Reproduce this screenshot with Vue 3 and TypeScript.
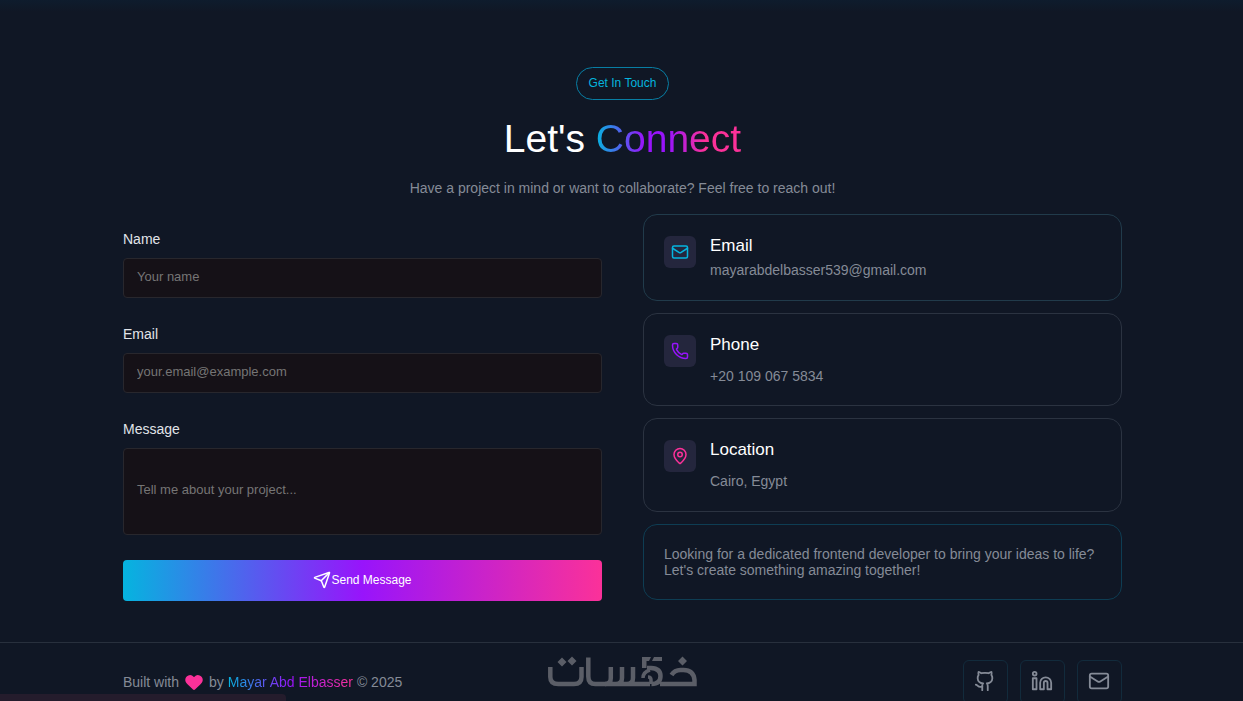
<script setup lang="ts">
interface Contact {
  title: string
  value: string
  kind: 'mail' | 'phone' | 'pin'
}

const contacts: Contact[] = [
  { title: 'Email', value: 'mayarabdelbasser539@gmail.com', kind: 'mail' },
  { title: 'Phone', value: '+20 109 067 5834', kind: 'phone' },
  { title: 'Location', value: 'Cairo, Egypt', kind: 'pin' },
]

const socials = ['github', 'linkedin', 'mail']
</script>

<template>
  <div class="page">
    <main class="wrap">
      <header class="intro">
        <span class="badge">Get In Touch</span>
        <h1>Let's <span class="gradient-text">Connect</span></h1>
        <p>Have a project in mind or want to collaborate? Feel free to reach out!</p>
      </header>

      <div class="columns">
        <form class="form" @submit.prevent>
          <label for="name">Name</label>
          <input id="name" type="text" placeholder="Your name" />
          <label for="email">Email</label>
          <input id="email" type="email" placeholder="your.email@example.com" />
          <label for="message">Message</label>
          <textarea id="message" placeholder="Tell me about your project..."></textarea>
          <button type="submit">
            <svg class="icon" viewBox="0 0 24 24" width="18" height="18">
              <path d="M14.536 21.686a.5.5 0 0 0 .937-.024l6.5-19a.496.496 0 0 0-.635-.635l-19 6.5a.5.5 0 0 0-.024.937l7.93 3.18a2 2 0 0 1 1.112 1.11z" />
              <path d="m21.854 2.147-10.94 10.939" />
            </svg>
            <span>Send Message</span>
          </button>
        </form>

        <div class="cards">
          <section v-for="c in contacts" :key="c.kind" class="card" :class="c.kind">
            <span class="tile">
              <svg class="icon" viewBox="0 0 24 24" width="18" height="18">
                <template v-if="c.kind === 'mail'">
                  <path d="m22 7-8.991 5.727a2 2 0 0 1-2.009 0L2 7" />
                  <rect x="2" y="4" width="20" height="16" rx="2" />
                </template>
                <path v-else-if="c.kind === 'phone'" d="M13.832 16.568a1 1 0 0 0 1.213-.303l.355-.465A2 2 0 0 1 17 15h3a2 2 0 0 1 2 2v3a2 2 0 0 1-2 2A18 18 0 0 1 2 4a2 2 0 0 1 2-2h3a2 2 0 0 1 2 2v3a2 2 0 0 1-.8 1.6l-.468.351a1 1 0 0 0-.292 1.233 14 14 0 0 0 6.392 6.384" />
                <template v-else>
                  <path d="M20 10c0 4.993-5.539 10.193-7.399 11.799a1 1 0 0 1-1.202 0C9.539 20.193 4 14.993 4 10a8 8 0 0 1 16 0" />
                  <circle cx="12" cy="10" r="3" />
                </template>
              </svg>
            </span>
            <div class="detail">
              <h2>{{ c.title }}</h2>
              <p>{{ c.value }}</p>
            </div>
          </section>
          <p class="note">Looking for a dedicated frontend developer to bring your ideas to life? Let's create something amazing together!</p>
        </div>
      </div>
    </main>

    <footer>
      <div class="wrap foot">
        <p class="credit">
          <span>Built with</span>
          <svg viewBox="0 0 24 24" width="20" height="20" aria-label="love">
            <path fill="#fb3199" d="M1.500 9.500a5.800 5.800 0 0 1 10-3.900.7.7 0 0 0 1 0A5.800 5.800 0 0 1 22.500 9.500c0 2.290-1.500 4-3 5.500l-6 5.800a2 2 0 0 1-3 0L4.500 15c-1.500-1.500-3-3.200-3-5.500" />
          </svg>
          <span>by <span class="gradient-text">Mayar Abd Elbasser</span> © 2025</span>
        </p>
        <svg class="mark" viewBox="0 0 150 32" width="150" height="32" role="img" aria-label="خمسات">
          <g fill="none" stroke="#5b5e67" stroke-width="4.500">
            <path d="M2.300 11v10q0 7 8 7h15.700q7.500 0 7.500-7V11" />
            <path d="M40.300 1.500v19q0 7.500 7 7.500h10q5.500 0 5.500-6V11" />
            <path d="M57 28h11q6 0 6-6V11M68 28h11q6 0 6-6V11M79 28h23" />
            <path d="M99 12h4q9.500.5 9.500 8 0 8-9 8" />
            <path d="M112 28h34.500v-4q-1-10-11-10h-3q-6 0-9 5" />
          </g>
          <path fill="none" stroke="#5b5e67" stroke-width="3.500" d="M95 22q0-6 7-8M103 28v-4q0-3-3-3" />
          <path fill="#5b5e67" d="M94 1h9l-2 4h-2.500v7H94zM106 1h8v4h-10zM14 1.500l4.500 4.500-4.500 4.500L9.500 6zM24 .5 28.500 5 24 9.500 19.500 5zM134.500.5l4.500 4.500-4.500 4.500L130 5z" />
        </svg>
        <nav>
          <a v-for="s in socials" :key="s" href="#" :aria-label="s">
            <svg class="icon" viewBox="0 0 24 24" width="22" height="22">
              <template v-if="s === 'github'">
                <path d="M15 22v-4a4.800 4.800 0 0 0-1-3.500c3 0 6-2 6-5.500.08-1.250-.27-2.480-1-3.500.28-1.150.28-2.350 0-3.500 0 0-1 0-3 1.500-2.640-.5-5.360-.5-8 0C6 2 5 2 5 2c-.3 1.150-.3 2.350 0 3.500A5.403 5.403 0 0 0 4 9c0 3.500 3 5.500 6 5.500-.39.49-.68 1.050-.85 1.650-.17.6-.22 1.230-.15 1.850v4" />
                <path d="M9 18c-4.510 2-5-2-7-2" />
              </template>
              <template v-else-if="s === 'linkedin'">
                <path d="M16 8a6 6 0 0 1 6 6v7h-4v-7a2 2 0 0 0-4 0v7h-4v-7a6 6 0 0 1 6-6z" />
                <rect x="2" y="9" width="4" height="12" />
                <circle cx="4" cy="4" r="2" />
              </template>
              <template v-else>
                <path d="m22 7-8.991 5.727a2 2 0 0 1-2.009 0L2 7" />
                <rect x="2" y="4" width="20" height="16" rx="2" />
              </template>
            </svg>
          </a>
        </nav>
      </div>
    </footer>
    <div class="status"></div>
  </div>
</template>

<style>
html {
  background: #101725;
  scrollbar-width: none;
}
body {
  margin: 0;
}
</style>

<style scoped>
* {
  box-sizing: border-box;
}
.page {
  min-height: 100vh;
  background: linear-gradient(#0e1c2d, #101725 12px);
  color: #858b97;
  font-family: "Liberation Sans", Arial, sans-serif;
  font-size: 14px;
  line-height: 16px;
}
h1,
h2,
p {
  margin: 0;
  font-weight: 400;
}
.wrap {
  padding: 0 121px 0 123px;
}
.intro {
  display: flex;
  flex-direction: column;
  align-items: center;
  padding-top: 67px;
}
.badge {
  padding: 8px 12px;
  border: 1px solid #087ea4;
  border-radius: 17px;
  color: #05b4df;
  font-size: 12px;
  line-height: 15px;
}
h1 {
  margin-top: 16px;
  color: #fff;
  font-size: 39px;
  line-height: 46px;
}
.gradient-text {
  background: linear-gradient(90deg, #05b4df, #9814fb 50%, #fb3199);
  background-clip: text;
  color: transparent;
}
h1 .gradient-text {
  background-image: linear-gradient(90deg, #05b4df, #9814fb 33%, #9814fb 50%, #fb3199 75%);
}
.intro p {
  margin-top: 18px;
}
.columns {
  display: grid;
  grid-template-columns: 1fr 1fr;
  gap: 41px;
  margin-top: 18px;
}
.form {
  display: flex;
  flex-direction: column;
  padding-top: 17px;
}
label {
  margin-bottom: 11px;
  color: #e1e4e9;
}
input,
textarea {
  width: 100%;
  height: 40px;
  margin: 0 0 28px;
  padding: 0 13px 4px;
  border: 1px solid #28272d;
  border-radius: 4px;
  outline: none;
  background: #151117;
  color: #e1e4e9;
  font: 13px/16px "Liberation Sans", Arial, sans-serif;
}
textarea {
  height: 87px;
  margin-bottom: 25px;
  padding: 33px 13px;
  resize: none;
}
::placeholder {
  color: #757575;
  opacity: 1;
}
button {
  display: flex;
  align-items: center;
  justify-content: center;
  height: 41px;
  padding: 0 0 2px;
  border: 0;
  border-radius: 4px;
  background: linear-gradient(90deg, #05b4df, #9814fb 50%, #fb3199);
  color: #fff;
  font: 12px/16px "Liberation Sans", Arial, sans-serif;
}
.icon {
  display: block;
  fill: none;
  stroke: currentColor;
  stroke-width: 2;
  stroke-linecap: round;
  stroke-linejoin: round;
}
.cards {
  display: flex;
  flex-direction: column;
  gap: 12px;
}
.card {
  display: flex;
  gap: 14px;
  min-height: 94px;
  padding: 21px 20px 20px;
  border: 1px solid #2b3341;
  border-radius: 14px;
}
.card.mail {
  min-height: 87px;
  border-color: #213b4b;
}
.card.phone {
  min-height: 93px;
}
.tile {
  display: grid;
  place-items: center;
  width: 32px;
  height: 32px;
  border-radius: 6px;
  background: #24263d;
}
.mail .tile {
  color: #05b4df;
}
.phone .tile {
  color: #9814fb;
}
.pin .tile {
  color: #fb3199;
}
h2 {
  color: #fff;
  font-size: 17px;
  line-height: 20px;
}
.detail p {
  margin-top: 13px;
}
.mail .detail p {
  margin-top: 6px;
}
.note {
  padding: 21px 20px;
  border: 1px solid #0e3d53;
  border-radius: 14px;
}
footer {
  margin-top: 41px;
  border-top: 1px solid #28303d;
}
.foot {
  display: grid;
  grid-template-columns: 1fr auto 1fr;
  align-items: start;
  height: 58px;
  overflow: hidden;
}
.credit {
  display: flex;
  gap: 5px;
  align-items: center;
  padding-top: 29px;
}
.mark {
  margin-top: 13px;
}
nav {
  display: flex;
  justify-content: flex-end;
  gap: 12px;
  padding-top: 17px;
}
nav a {
  display: grid;
  place-items: center;
  width: 45px;
  height: 44px;
  padding: 0 1px 2px 0;
  border: 1px solid #122b3c;
  border-radius: 6px;
  color: #858b97;
}
.status {
  position: fixed;
  bottom: 0;
  left: 0;
  width: 286px;
  height: 7px;
  border-radius: 0 4px 0 0;
  background: #241c2c;
}
</style>
